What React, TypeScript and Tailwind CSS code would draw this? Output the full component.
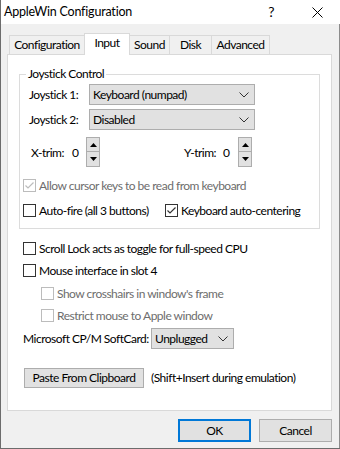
import React from 'react';

const Chevron = () => (
  <svg width="10" height="6" viewBox="0 0 10 6" className="shrink-0">
    <polyline points="0.5,0.5 5,5 9.5,0.5" fill="none" stroke="#333" strokeWidth="1" />
  </svg>
);

const Combo = ({ value, className }: { value: string; className: string }) => (
  <div className={`flex h-[21px] items-center justify-between border border-[#adadad] bg-[#e1e1e1] pl-[3px] pr-[5px] ${className}`}>
    <span className="whitespace-nowrap">{value}</span>
    <Chevron />
  </div>
);

const Check = ({ checked, disabled }: { checked?: boolean; disabled?: boolean }) => (
  <span
    className={`flex h-[13px] w-[13px] shrink-0 items-center justify-center border bg-white ${
      disabled ? 'border-[#bcbcbc]' : 'border-[#333333]'
    }`}
  >
    {checked && (
      <svg width="11" height="11" viewBox="0 0 11 11">
        <polyline
          points="1.5,5.5 4,8 9.5,2.5"
          fill="none"
          stroke={disabled ? '#bcbcbc' : '#333'}
          strokeWidth="1.2"
        />
      </svg>
    )}
  </span>
);

const CheckRow = ({
  label,
  checked,
  disabled,
  className = '',
}: {
  label: string;
  checked?: boolean;
  disabled?: boolean;
  className?: string;
}) => (
  <div className={`flex h-[13px] items-center ${className}`}>
    <Check checked={checked} disabled={disabled} />
    <span className={`ml-[3px] whitespace-nowrap ${disabled ? 'text-[#6d6d6d]' : 'text-black'}`}>{label}</span>
  </div>
);

const Spinner = () => (
  <div className="flex w-[14px] shrink-0 flex-col">
    <div className="flex h-[15px] items-center justify-center border border-[#adadad] bg-[#e1e1e1]">
      <svg width="7" height="4" viewBox="0 0 7 4">
        <polygon points="3.5,0 7,4 0,4" fill="#000" />
      </svg>
    </div>
    <div className="flex h-[15px] items-center justify-center border border-t-0 border-[#adadad] bg-[#e1e1e1]">
      <svg width="7" height="4" viewBox="0 0 7 4">
        <polygon points="0,0 7,0 3.5,4" fill="#000" />
      </svg>
    </div>
  </div>
);

const tabs = [
  { name: 'Configuration', cls: 'ml-[2px] w-[75px] border-l' },
  { name: 'Input', cls: 'w-[46px] border-x', active: true },
  { name: 'Sound', cls: 'w-[39px]' },
  { name: 'Disk', cls: 'w-[42px] border-l' },
  { name: 'Advanced', cls: 'w-[59px] border-x' },
];

export default function App() {
  return (
    <div className="flex h-[449px] w-[340px] flex-col whitespace-nowrap border-b border-l border-[#6c6c6c] bg-white font-['Lato',sans-serif] text-[12px] leading-[16px] tracking-[-0.5px] text-black">
      {/* Title bar */}
      <div className="flex h-[24px] shrink-0 items-center bg-white pl-[3px]">
        <span className="text-[12.5px] tracking-[-0.2px]">AppleWin Configuration</span>
        <span className="ml-auto mr-[38px] text-[14px]">?</span>
        <svg width="11" height="11" viewBox="0 0 11 11" className="mr-[17px]">
          <path d="M0.5 0.5 L10.5 10.5 M10.5 0.5 L0.5 10.5" stroke="#000" strokeWidth="1" />
        </svg>
      </div>

      {/* Body */}
      <div className="flex flex-1 flex-col border-r border-[#8c8c8c] bg-[#f0f0f0] pl-[6px] pt-[9px]">
        {/* Tabs */}
        <div className="flex h-[21px] items-end">
          {tabs.map((t) => (
            <div
              key={t.name}
              className={`flex items-center justify-center border-t border-[#d9d9d9] ${t.cls} ${
                t.active ? 'relative z-10 mb-[-1px] h-[22px] bg-white pb-[3px]' : 'h-[19px] bg-[#f0f0f0]'
              }`}
            >
              {t.name}
            </div>
          ))}
        </div>

        {/* Panel */}
        <div className="flex h-[357px] w-[325px] flex-col border border-[#d9d9d9] bg-white">
          <fieldset className="ml-[11px] mt-[11px] w-[301px] border border-[#dcdcdc] pb-[11px]">
            <legend className="ml-[6px] px-[2px] leading-[16px]">Joystick Control</legend>
            <div className="mt-[2px] flex h-[21px] items-center">
              <span className="ml-[9px] w-[60px]">Joystick 1:</span>
              <Combo value="Keyboard (numpad)" className="w-[166px]" />
            </div>
            <div className="mt-[4px] flex h-[21px] items-center">
              <span className="ml-[9px] w-[60px]">Joystick 2:</span>
              <Combo value="Disabled" className="w-[166px]" />
            </div>
            <div className="mt-[7px] flex items-center">
              <span className="ml-[11px] w-[41px] shrink-0 pt-[2px]">X-trim:</span>
              <span className="w-[14px] shrink-0 pt-[2px]">0</span>
              <Spinner />
              <span className="ml-[84px] w-[39px] shrink-0 pt-[2px]">Y-trim:</span>
              <span className="w-[15px] shrink-0 pt-[2px]">0</span>
              <Spinner />
            </div>
            <CheckRow className="ml-[3px] mt-[12px]" label="Allow cursor keys to be read from keyboard" checked disabled />
            <div className="ml-[3px] mt-[12px] flex">
              <CheckRow className="w-[142px] shrink-0" label="Auto-fire (all 3 buttons)" />
              <CheckRow label="Keyboard auto-centering" checked />
            </div>
          </fieldset>

          <CheckRow className="ml-[15px] mt-[13px]" label="Scroll Lock acts as toggle for full-speed CPU" />
          <CheckRow className="ml-[15px] mt-[9px]" label="Mouse interface in slot 4" />
          <CheckRow className="ml-[33px] mt-[10px]" label="Show crosshairs in window's frame" disabled />
          <CheckRow className="ml-[33px] mt-[9px]" label="Restrict mouse to Apple window" disabled />

          <div className="mt-[6px] flex h-[21px] items-center">
            <span className="ml-[15px] w-[128px] shrink-0">Microsoft CP/M SoftCard:</span>
            <Combo value="Unplugged" className="w-[83px]" />
          </div>

          <div className="mt-[19px] flex h-[20px] items-center">
            <button className="ml-[16px] flex h-[20px] w-[120px] shrink-0 items-center justify-center border border-[#adadad] bg-[#e1e1e1]">
              Paste From Clipboard
            </button>
            <span className="ml-[7px]">(Shift+Insert during emulation)</span>
          </div>
        </div>

        {/* Dialog buttons */}
        <div className="mt-[8px] flex justify-end pr-[7px]">
          <button className="flex h-[23px] w-[73px] items-center justify-center border-2 border-[#0078d7] bg-[#e1e1e1]">
            OK
          </button>
          <button className="ml-[8px] flex h-[23px] w-[73px] items-center justify-center border border-[#adadad] bg-[#e1e1e1]">
            Cancel
          </button>
        </div>
      </div>
    </div>
  );
}
